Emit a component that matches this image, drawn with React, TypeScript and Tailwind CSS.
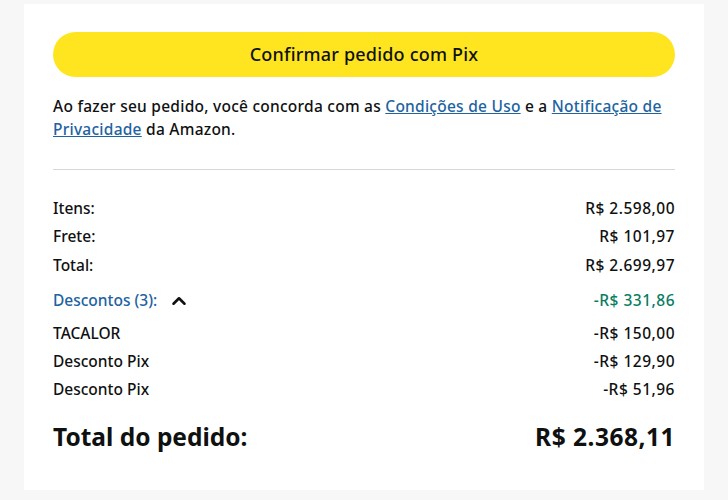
import { ChevronUp } from "lucide-react";

const rows = [
    { label: "Itens:", value: "R$ 2.598,00" },
    { label: "Frete:", value: "R$ 101,97" },
    { label: "Total:", value: "R$ 2.699,97" },
];

const discounts = [
    { label: "TACALOR", value: "-R$ 150,00" },
    { label: "Desconto Pix", value: "-R$ 129,90" },
    { label: "Desconto Pix", value: "-R$ 51,96" },
];

const App = () => {
    return (
        <div className="min-h-[500px] bg-[#f7f7f7] pt-1 font-['Noto_Sans',sans-serif] text-[#0f1111]">
            <div className="mx-6 h-[486px] bg-white px-[29px] pt-7">
                <button className="flex h-[45px] w-full items-center justify-center rounded-full bg-[#ffe51f] text-[18px] font-medium tracking-[0.2px] text-[#0f1111]">
                    Confirmar pedido com Pix
                </button>

                <p className="mt-[18px] text-[15.5px] font-medium leading-[23px] tracking-[0.25px]">
                    Ao fazer seu pedido, você concorda com as{" "}
                    <a className="text-[#2162a1] underline">Condições de Uso</a> e a{" "}
                    <a className="text-[#2162a1] underline">Notificação de Privacidade</a> da Amazon.
                </p>

                <div className="mt-[28px] h-px bg-[#d5d9d9]" />

                <div className="mt-[24px] flex flex-col text-[15.5px] font-medium">
                    {rows.map((r, i) => (
                        <div key={i} className="flex h-[28.5px] items-center justify-between">
                            <span>{r.label}</span>
                            <span className="tracking-[0.5px]">{r.value}</span>
                        </div>
                    ))}
                    <div className="mt-[7px] flex h-[28.5px] items-center justify-between">
                        <span className="flex items-center gap-[11px] text-[#2162a1]">
                            Descontos (3):
                            <ChevronUp className="h-[22px] w-[22px] text-[#0f1111]" strokeWidth={2.8} />
                        </span>
                        <span className="tracking-[0.5px] text-[#067d62]">-R$ 331,86</span>
                    </div>
                    <div className="mt-[5px]">
                        {discounts.map((d, i) => (
                            <div key={i} className="flex h-[28px] items-center justify-between">
                                <span>{d.label}</span>
                                <span className="tracking-[0.5px]">{d.value}</span>
                            </div>
                        ))}
                    </div>
                </div>

                <div className="mt-[15px] flex items-center justify-between text-[24.5px] font-bold">
                    <span>Total do pedido:</span>
                    <span className="tracking-[0.5px]">R$ 2.368,11</span>
                </div>
            </div>
        </div>
    );
};

export default App;
